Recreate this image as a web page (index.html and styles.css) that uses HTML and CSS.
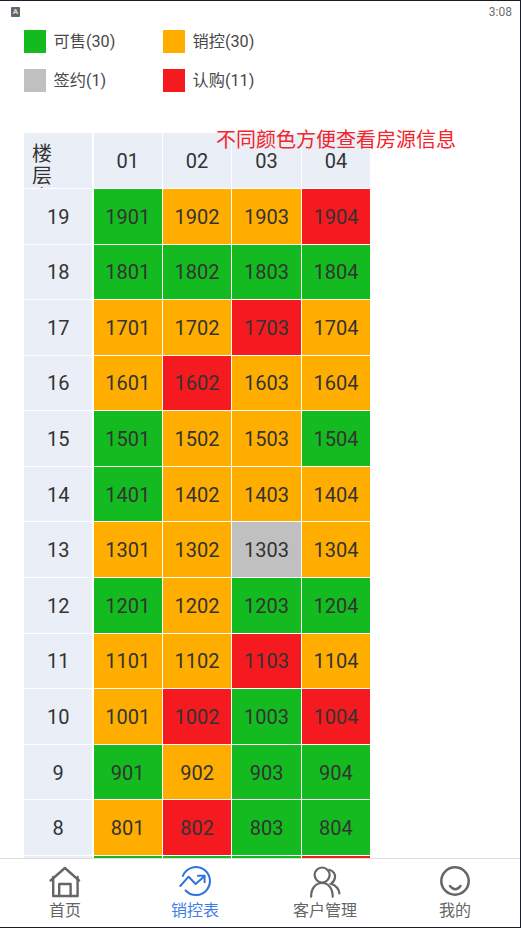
FILE: index.html
```html
<!DOCTYPE html>
<html lang="zh">
<head>
<meta charset="utf-8">
<title>销控表</title>
<link rel="stylesheet" href="styles.css">
</head>
<body>
<div class="app">
  <header class="status">
    <span class="status-badge">A</span>
    <span class="status-time">3:08</span>
  </header>
  <main class="main">
    <section class="legend">
      <div class="legend-item"><i class="swatch g"></i><span class="legend-text">可售(30)</span></div>
      <div class="legend-item"><i class="swatch o"></i><span class="legend-text">销控(30)</span></div>
      <div class="legend-item"><i class="swatch s"></i><span class="legend-text">签约(1)</span></div>
      <div class="legend-item"><i class="swatch r"></i><span class="legend-text">认购(11)</span></div>
    </section>
    <section class="board">
      <div class="note">不同颜色方便查看房源信息</div>
      <div class="grid">
        <div class="cell h corner"><span class="corner-text">楼层室</span></div>
        <div class="cell h">01</div><div class="cell h">02</div><div class="cell h">03</div><div class="cell h">04</div>
        <div class="cell h">19</div><div class="cell g">1901</div><div class="cell o">1902</div><div class="cell o">1903</div><div class="cell r">1904</div>
        <div class="cell h">18</div><div class="cell g">1801</div><div class="cell g">1802</div><div class="cell g">1803</div><div class="cell g">1804</div>
        <div class="cell h">17</div><div class="cell o">1701</div><div class="cell o">1702</div><div class="cell r">1703</div><div class="cell o">1704</div>
        <div class="cell h">16</div><div class="cell o">1601</div><div class="cell r">1602</div><div class="cell o">1603</div><div class="cell o">1604</div>
        <div class="cell h">15</div><div class="cell g">1501</div><div class="cell o">1502</div><div class="cell o">1503</div><div class="cell g">1504</div>
        <div class="cell h">14</div><div class="cell g">1401</div><div class="cell o">1402</div><div class="cell o">1403</div><div class="cell o">1404</div>
        <div class="cell h">13</div><div class="cell o">1301</div><div class="cell o">1302</div><div class="cell s">1303</div><div class="cell o">1304</div>
        <div class="cell h">12</div><div class="cell g">1201</div><div class="cell o">1202</div><div class="cell g">1203</div><div class="cell g">1204</div>
        <div class="cell h">11</div><div class="cell o">1101</div><div class="cell o">1102</div><div class="cell r">1103</div><div class="cell o">1104</div>
        <div class="cell h">10</div><div class="cell o">1001</div><div class="cell r">1002</div><div class="cell g">1003</div><div class="cell r">1004</div>
        <div class="cell h">9</div><div class="cell g">901</div><div class="cell o">902</div><div class="cell g">903</div><div class="cell g">904</div>
        <div class="cell h">8</div><div class="cell o">801</div><div class="cell r">802</div><div class="cell g">803</div><div class="cell g">804</div>
        <div class="cell h">7</div><div class="cell g">701</div><div class="cell g">702</div><div class="cell g">703</div><div class="cell r">704</div>
      </div>
    </section>
  </main>
  <nav class="tabs">
    <div class="tab">
      <svg class="tab-icon" viewBox="0 0 32 32" fill="none" stroke="#666" stroke-width="2.4" stroke-linejoin="round" stroke-linecap="round">
        <path d="M1.600 14.500 15.900 2 30 14.500"/>
        <path d="M4.200 11V30H28.600V11"/>
        <path d="M10.200 30V18H21.600V30"/>
      </svg>
      <span>首页</span>
    </div>
    <div class="tab active">
      <svg class="tab-icon" viewBox="0 0 32 32" fill="none" stroke="#2f74de" stroke-width="2" stroke-linejoin="round" stroke-linecap="round">
        <path d="M3.900 10A14 14 0 1 1 6.600 24.500"/>
        <path d="M1.300 20 9.600 10.700 16.600 18 24.900 10.700"/>
        <path d="M18.900 9.700H25.600V16.300"/>
      </svg>
      <span>销控表</span>
    </div>
    <div class="tab">
      <svg class="tab-icon" viewBox="0 0 32 32" fill="none" stroke="#666" stroke-width="2.2" stroke-linecap="round">
        <circle cx="13.100" cy="9" r="7.500"/>
        <path d="M2.100 30.700C2.100 22 7 17 13.100 17S23.700 22 23.700 30.700"/>
        <path d="M20.400 3.800C24.500 5 26.500 8.500 26 11.500S24 16.500 22 17.800C27 19.500 30 23.500 30.400 27.500"/>
      </svg>
      <span>客户管理</span>
    </div>
    <div class="tab">
      <svg class="tab-icon" viewBox="0 0 32 32" fill="none" stroke="#666" stroke-width="2.500" stroke-linecap="round">
        <circle cx="16" cy="15" r="13.700"/>
        <path d="M11 20Q16.300 26.500 21.500 20"/>
      </svg>
      <span>我的</span>
    </div>
  </nav>
</div>
</body>
</html>
```
FILE: styles.css
```css
* { box-sizing: border-box; }
html, body { margin: 0; height: 100%; }
body {
  background: #1a1c2e;
  padding: 1px 1px 1px 0;
  font-family: Roboto, "Noto Sans CJK SC", sans-serif;
  overflow: hidden;
}
.app {
  height: 100%;
  background: #fff;
  display: flex;
  flex-direction: column;
  overflow: hidden;
}
.status {
  flex: none;
  height: 22px;
  padding: 0 8px 0 11px;
  display: flex;
  align-items: center;
  justify-content: space-between;
}
.status-badge {
  width: 9px;
  height: 10px;
  border-radius: 1px;
  background: #666;
  color: #ddd;
  font-size: 8px;
  font-weight: 700;
  line-height: 10px;
  text-align: center;
}
.status-time { font-size: 12px; color: #707070; }
.main { flex: 1; min-height: 0; overflow: hidden; padding: 7px 0 0 24.100px; }
.legend {
  display: grid;
  grid-template-columns: 139px 139px;
  row-gap: 16px;
  width: 278px;
}
.legend-item {
  display: flex;
  align-items: center;
  gap: 7.500px;
  height: 23px;
  font-size: 16.200px;
  color: #484848;
}
.legend-text { padding-bottom: 3px; }
.swatch { width: 22px; height: 23px; flex: none; }
.g { background: #13bb20; }
.o { background: #ffae00; }
.s { background: #c0c0c0; }
.r { background: #f41a1f; }
.board { position: relative; margin-top: 41.400px; }
.note {
  position: absolute;
  left: 191.900px;
  top: -5.400px;
  font-size: 20px;
  line-height: 24px;
  color: #f5232a;
  white-space: nowrap;
  z-index: 1;
}
.grid {
  width: 346px;
  display: grid;
  grid-template-columns: repeat(5, 1fr);
  grid-auto-rows: 54.580px;
  gap: 1px 1.200px;
}
.cell {
  display: flex;
  align-items: center;
  justify-content: center;
  padding-top: 1px;
  font-size: 20px;
  color: #333;
  overflow: hidden;
}
.h { background: #e9eef7; }
.corner { justify-content: flex-start; align-items: flex-start; padding: 10px 0 0 8px; }
.corner-text { width: 22px; line-height: 22px; }
.tabs {
  flex: none;
  height: 69px;
  border-top: 1px solid #ddd;
  background: #fff;
  display: grid;
  grid-template-columns: repeat(4, 1fr);
}
.tab {
  display: flex;
  flex-direction: column;
  align-items: center;
  padding-top: 7px;
  font-size: 16px;
  line-height: 24px;
  color: #666;
}
.tab-icon { width: 32px; height: 32px; flex: none; margin-bottom: 1px; }
.active { color: #3f7ee8; }
```
